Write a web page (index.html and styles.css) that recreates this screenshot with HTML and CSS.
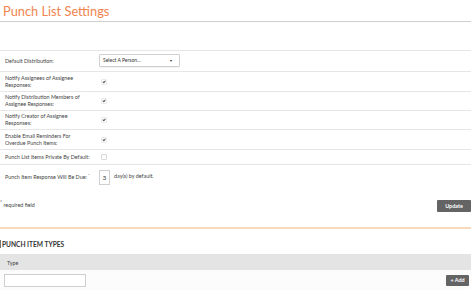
FILE: index.html
```html
<!DOCTYPE html>
<html lang="en">
<head>
  <meta charset="UTF-8">
  <title>Punch List Settings</title>
  <link rel="stylesheet" href="styles.css">
</head>
<body>
  <div class="page">
    <h1 class="title">Punch List Settings</h1>

    <div class="settings">
      <div class="row r1">
        <div class="label">Default Distribution:</div>
        <div class="control">
          <div class="select">Select A Person...<span class="caret">&#9662;</span></div>
        </div>
      </div>
      <div class="row r2">
        <div class="label">Notify Assignees of Assignee Responses:</div>
        <div class="control"><span class="check on"></span></div>
      </div>
      <div class="row r3">
        <div class="label">Notify Distribution Members of Assignee Responses:</div>
        <div class="control"><span class="check on"></span></div>
      </div>
      <div class="row r4">
        <div class="label">Notify Creator of Assignee Responses:</div>
        <div class="control"><span class="check on"></span></div>
      </div>
      <div class="row r5">
        <div class="label">Enable Email Reminders For Overdue Punch Items:</div>
        <div class="control"><span class="check on"></span></div>
      </div>
      <div class="row r6">
        <div class="label nowrap">Punch List Items Private By Default:</div>
        <div class="control"><span class="check"></span></div>
      </div>
      <div class="row r7">
        <div class="label nowrap">Punch Item Response Will Be Due:<sup>*</sup></div>
        <div class="control">
          <div class="days">3</div>
          <span class="days-text">day(s) by default.</span>
        </div>
      </div>
    </div>

    <div class="form-foot">
      <span class="required"><sup>*</sup> required field</span>
      <button class="btn update">Update</button>
    </div>

    <h2 class="section"><span>Punch Item Types</span></h2>
    <div class="types">
      <div class="types-head">Type</div>
      <div class="types-row">
        <div class="type-input"></div>
        <button class="btn add">+ Add</button>
      </div>
    </div>
  </div>
</body>
</html>
```

FILE: styles.css
```css
body {
  margin: 0;
  background: #fff;
  font-family: Lato, "Open Sans", sans-serif;
  color: #333;
}

.page {
  width: 471px;
}

.title {
  margin: 0;
  padding: 2px 0 0 3px;
  height: 19px;
  font-size: 12.8px;
  font-weight: 400;
  color: #f0844f;
  border-bottom: 1px solid #cfcfcf;
  line-height: 18px;
}

.settings {
  margin-top: 28px;
  border-top: 1px solid #e6e6e6;
}

.row {
  display: flex;
  align-items: center;
  border-bottom: 1px solid #e6e6e6;
}
.r1 { height: 20px; }
.r2 { height: 19px; }
.r3 { height: 18px; }
.r4 { height: 18px; }
.r5 { height: 19px; }
.r6 { height: 14px; }
.r7 {
  height: 25px;
  border-bottom: none;
}

.label {
  flex: none;
  width: 76px;
  padding: 0 18px 0 5px;
  font-size: 5.4px;
  line-height: 6.6px;
  color: #444;
}
.label.nowrap {
  white-space: nowrap;
}
.label sup {
  font-size: 4.6px;
  line-height: 0;
  vertical-align: 2px;
  margin-left: 1px;
}

.control {
  display: flex;
  align-items: center;
  gap: 4px;
}

.select {
  position: relative;
  width: 76px;
  height: 11px;
  margin-top: -1px;
  padding-left: 3px;
  border: 1px solid #cfcfcf;
  border-radius: 1px;
  font-size: 5px;
  line-height: 11px;
  color: #333;
  box-shadow: 0 1px 1px rgba(0,0,0,0.05);
}
.caret {
  position: absolute;
  right: 7px;
  top: 0;
  font-size: 4px;
}

.check {
  display: inline-block;
  width: 4px;
  height: 4px;
  margin-left: 2px;
  border: 1px solid #d8d8d8;
  border-radius: 1px;
  position: relative;
}
.check.on {
  border-color: #ececec;
}
.check.on::after {
  content: "";
  position: absolute;
  left: 1.2px;
  top: 0;
  width: 1px;
  height: 2.4px;
  border: solid #555;
  border-width: 0 1px 1px 0;
  transform: rotate(40deg);
}

.days {
  width: 9px;
  height: 13px;
  border: 1px solid #cfcfcf;
  font-size: 6px;
  line-height: 13px;
  text-align: center;
  color: #333;
}
.days-text {
  font-size: 5.4px;
  color: #444;
  margin-top: -4px;
}

.form-foot {
  display: flex;
  justify-content: space-between;
  align-items: center;
  margin-top: 10px;
  padding-bottom: 15px;
  border-bottom: 2px solid #f8d9bd;
}
.required {
  font-size: 5.4px;
  color: #444;
  margin-top: -3px;
}
.required sup {
  font-size: 5px;
  line-height: 0;
}

.btn {
  border: none;
  border-radius: 1px;
  background: #646464;
  color: #fff;
  font-family: Lato, "Open Sans", sans-serif;
  font-weight: 700;
  font-size: 5.4px;
  padding: 0;
  height: 12px;
}
.update {
  width: 34px;
}

.section {
  margin: 0;
  height: 25px;
  font-size: 6.6px;
  font-weight: 700;
  text-transform: uppercase;
  color: #333;
  line-height: 30px;
}
.section span {
  border-left: 1px solid #777;
  padding-left: 1px;
}

.types-head {
  height: 16px;
  background: #e4e4e4;
  padding-left: 7px;
  font-size: 5.4px;
  line-height: 18px;
  color: #444;
}

.types-row {
  display: flex;
  justify-content: space-between;
  align-items: center;
  height: 20px;
  padding: 0 2px 0 4px;
  background: #fcfcfc;
}
.type-input {
  width: 80px;
  height: 11px;
  border: 1px solid #cfcfcf;
  background: #fff;
}
.add {
  width: 23px;
  height: 11px;
}
```
